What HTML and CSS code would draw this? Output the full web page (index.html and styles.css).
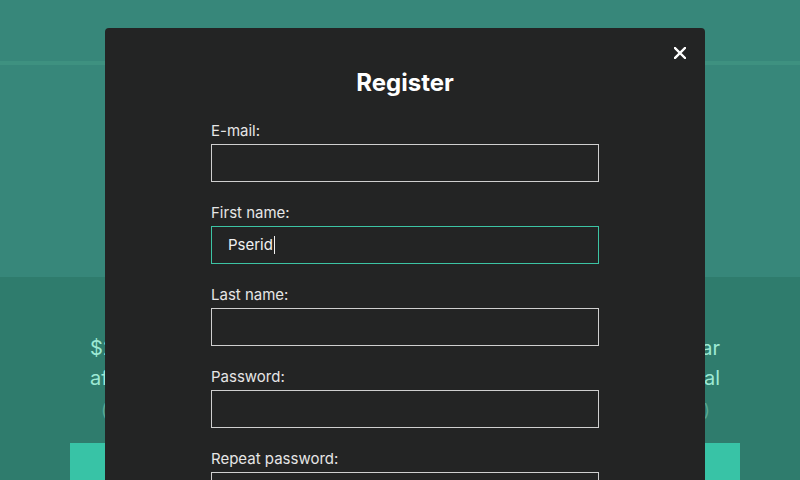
FILE: index.html
```html
<!DOCTYPE html>
<html lang="en">
<head>
	<meta charset="UTF-8">
	<title>Register</title>
	<link rel="stylesheet" href="styles.css">
</head>
<body>
	<div class="topbar"></div>
	<div class="hero"></div>
	<div class="pricing">
		<p class="price">$20 per month or $200 per year</p>
		<p class="price">after 14 days you can switch to the annual</p>
		<p class="note">(no credit card required for the trial)</p>
		<div class="cta"></div>
	</div>

	<div class="modal">
		<a class="close" href="#">
			<svg width="12" height="12" viewBox="0 0 12 12"><path d="M1 1L11 11M11 1L1 11" stroke="#fff" stroke-width="2.4" stroke-linecap="square"/></svg>
		</a>
		<h2>Register</h2>
		<form class="form">
			<div class="field">
				<label>E-mail:</label>
				<input type="text">
			</div>
			<div class="field">
				<label>First name:</label>
				<div class="box focus">Pserid<span class="caret"></span></div>
			</div>
			<div class="field">
				<label>Last name:</label>
				<input type="text">
			</div>
			<div class="field">
				<label>Password:</label>
				<input type="password">
			</div>
			<div class="field">
				<label>Repeat password:</label>
				<input type="password">
			</div>
		</form>
	</div>
</body>
</html>
```

FILE: styles.css
```css
*{
	margin: 0;
	padding: 0;
	box-sizing: border-box;
}
body{
	background: #2f7c6d;
	font-family: Inter, "Liberation Sans", sans-serif;
	height: 480px;
	overflow: hidden;
}
.topbar{
	height: 65px;
	background: #37877a;
	border-bottom: 4px solid #3e9180;
}
.hero{
	height: 212px;
	background: #37877a;
}
.pricing{
	padding: 56px 80px 0 90px;
}
.price{
	color: #9de9d4;
	font-size: 20px;
	line-height: 30px;
	text-align: justify;
	text-align-last: justify;
}
.note{
	color: #5aa794;
	font-size: 17px;
	line-height: 30px;
	margin: 2px 0 0 11px;
	padding-right: 10px;
	text-align: justify;
	text-align-last: justify;
}
.cta{
	height: 60px;
	margin: 18px -20px 0 -20px;
	background: #38c3a6;
}

.modal{
	position: absolute;
	left: 105px;
	top: 28px;
	width: 600px;
	height: 452px;
	background: #232424;
	border-radius: 4px 4px 0 0;
	padding-top: 40px;
	overflow: hidden;
}
.close{
	position: absolute;
	top: 19px;
	right: 19px;
	width: 12px;
	height: 12px;
	display: block;
}
.close svg{
	display: block;
}
.modal h2{
	color: #fff;
	font-size: 24px;
	font-weight: 700;
	line-height: 30px;
	text-align: center;
	margin-bottom: 22px;
}
.form{
	width: 388px;
	margin: 0 auto;
}
.field{
	margin-bottom: 20px;
}
.field label{
	display: block;
	color: #e6e6e6;
	font-size: 15px;
	line-height: 22px;
	margin-bottom: 2px;
}
.field input,
.box{
	display: block;
	width: 100%;
	height: 38px;
	background: #232424;
	border: 1px solid #cfcfcf;
	color: #f0f0f0;
	font-family: inherit;
	font-size: 15px;
	padding: 0 16px;
	outline: none;
}
.box{
	line-height: 36px;
}
.box.focus{
	border-color: #3cc4a4;
}
.caret{
	display: inline-block;
	width: 1px;
	height: 18px;
	background: #f0f0f0;
	vertical-align: -4px;
	margin-left: 1px;
}
```
